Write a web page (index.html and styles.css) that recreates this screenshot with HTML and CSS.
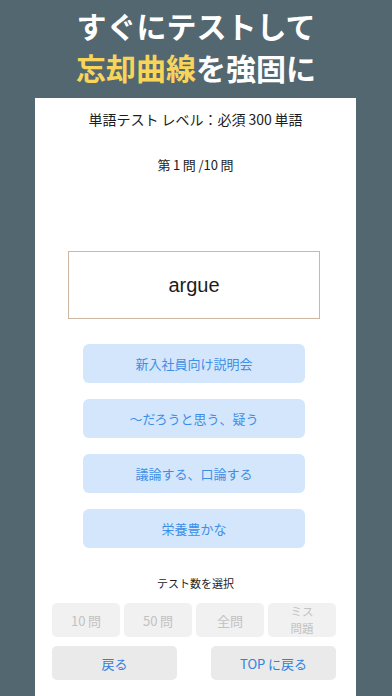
FILE: index.html
```html
<!DOCTYPE html>
<html lang="ja">
<head>
<meta charset="utf-8">
<title>単語テスト</title>
<meta name="viewport" content="width=device-width,initial-scale=1">
<link rel="stylesheet" href="styles.css">
</head>
<body>

<header class="promo">
  <p>すぐにテストして</p>
  <p><span class="hl">忘却曲線</span>を強固に</p>
</header>

<main class="panel">
  <div class="title">単語テスト レベル：必須&thinsp;300&thinsp;単語</div>
  <div class="progress">第&thinsp;1&thinsp;問&thinsp;/10&thinsp;問</div>

  <div class="word">argue</div>

  <div class="choices">
    <button class="choice">新入社員向け説明会</button>
    <button class="choice">～だろうと思う、疑う</button>
    <button class="choice">議論する、口論する</button>
    <button class="choice">栄養豊かな</button>
  </div>

  <div class="sel-label">テスト数を選択</div>
  <div class="counts">
    <button class="count" disabled>10&thinsp;問</button>
    <button class="count" disabled>50&thinsp;問</button>
    <button class="count" disabled>全問</button>
    <button class="count two" disabled>ミス<br>問題</button>
  </div>

  <div class="nav">
    <button class="back">戻る</button>
    <button class="back">TOP&thinsp;に戻る</button>
  </div>
</main>

</body>
</html>
```

FILE: styles.css
```css
:root{
  --slate:#536770;--yellow:#f7d55b;--ink:#1c1c1e;
  --choice-bg:#d3e6fc;--choice-fg:#3d8ee6;
  --gray-bg:#f1f1f1;--gray-fg:#c2c2c2;--nav-bg:#eaeaea;--nav-fg:#2f80e0
}
*{box-sizing:border-box;margin:0;padding:0}
html,body{height:100%}
body{background:var(--slate);font-family:"Noto Sans CJK JP","Noto Sans",sans-serif;color:var(--ink);display:flex;flex-direction:column;overflow:hidden}
button{font-family:inherit;border:none;cursor:pointer}

/* promo header */
.promo{height:98px;padding-top:4px;text-align:center;color:#fff;font-weight:700;font-size:30px;line-height:42px}
.promo .hl{color:var(--yellow)}

/* white card */
.panel{flex:1;background:#fff;margin:0 36px 0 35px;padding-top:11px;display:flex;flex-direction:column;align-items:center}
.title{font-size:14px;line-height:20px}
.progress{font-size:13px;line-height:20px;margin-top:26px}
.word{width:252px;height:68px;margin:76px 3px 0 0;border:1px solid #cdb7a3;display:flex;align-items:center;justify-content:center;font-family:"Liberation Sans","Noto Sans",sans-serif;font-size:20px}

.choices{display:flex;flex-direction:column;gap:16px;margin-top:25px}
.choice{width:222px;height:39px;margin-right:3px;border-radius:6px;background:var(--choice-bg);color:var(--choice-fg);font-size:13px}

.sel-label{font-size:11px;line-height:16px;margin-top:27px}
.counts{display:flex;gap:3.5px;margin-top:12px;margin-right:3px}
.count{width:68.5px;height:34px;border-radius:5px;background:var(--gray-bg);color:var(--gray-fg);font-size:13px;cursor:default}
.count.two{font-size:11.5px;line-height:17px}

.nav{width:284px;margin:9px 3px 0 0;display:flex;justify-content:space-between}
.back{width:125px;height:34px;border-radius:5px;background:var(--nav-bg);color:var(--nav-fg);font-size:13px}
```
